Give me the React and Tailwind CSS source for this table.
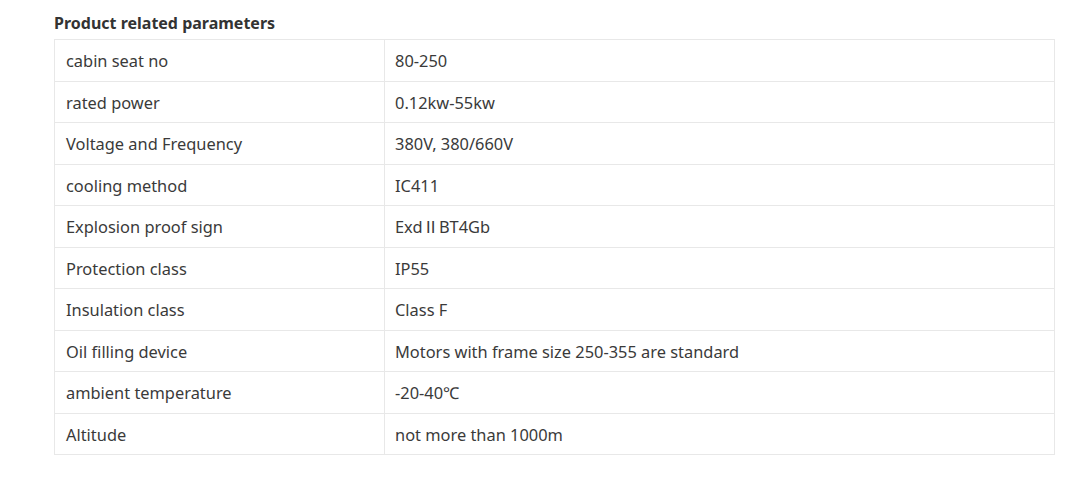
const rows = [
  ['cabin seat no', '80-250'],
  ['rated power', '0.12kw-55kw'],
  ['Voltage and Frequency', '380V, 380/660V'],
  ['cooling method', 'IC411'],
  ['Explosion proof sign', 'ExdⅡBT4Gb'],
  ['Protection class', 'IP55'],
  ['Insulation class', 'Class F'],
  ['Oil filling device', 'Motors with frame size 250-355 are standard'],
  ['ambient temperature', '-20-40℃'],
  ['Altitude', 'not more than 1000m'],
]

export default function App() {
  return (
    <div className="bg-white w-[1089px] h-[480px] pl-[54px] pt-[12px] text-[#333]" style={{ fontFamily: '"Noto Sans", "Noto Sans CJK SC", sans-serif' }}>
      <h2 className="text-[16px] font-bold leading-[22px] h-[27px] text-[#333]">Product related parameters</h2>
      <table className="w-[1001px] border-collapse text-[16.4px] text-[#3a3a3a]">
        <tbody>
          {rows.map(([k, v]) => (
            <tr key={k} className="h-[41.5px]">
              <td className="w-[330px] border border-[#e8e8e8] pl-[11px] pt-[3px] pb-0 align-middle">{k}</td>
              <td className="border border-[#e8e8e8] pl-[10px] pt-[3px] pb-0 align-middle">{v}</td>
            </tr>
          ))}
        </tbody>
      </table>
    </div>
  )
}
